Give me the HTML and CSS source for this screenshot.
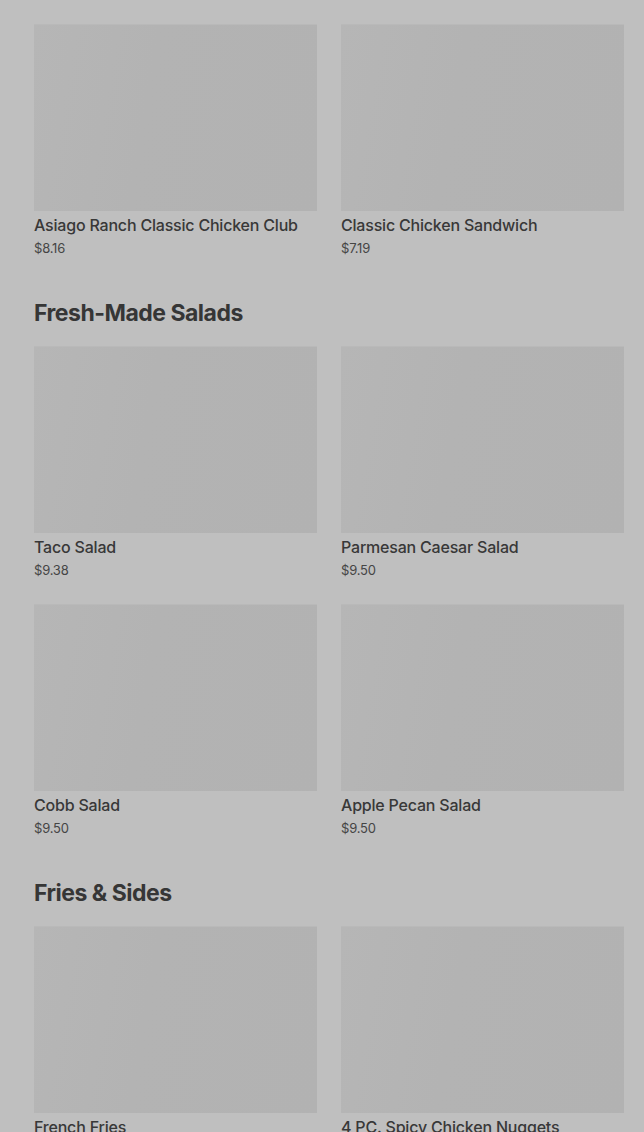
FILE: index.html
```html
<!DOCTYPE html>
<html lang="en">

<head>
    <meta charset="UTF-8">
    <title>Menu</title>
    <link rel="stylesheet" href="styles.css">
</head>

<body>
    <div class="menu">
        <section class="category">
            <ul class="items">
                <li class="item">
                    <div class="thumb"></div>
                    <h3 class="name">Asiago Ranch Classic Chicken Club</h3>
                    <p class="price">$8.16</p>
                </li>
                <li class="item">
                    <div class="thumb"></div>
                    <h3 class="name">Classic Chicken Sandwich</h3>
                    <p class="price">$7.19</p>
                </li>
            </ul>
        </section>

        <section class="category">
            <h2 class="category-title">Fresh-Made Salads</h2>
            <ul class="items">
                <li class="item">
                    <div class="thumb"></div>
                    <h3 class="name">Taco Salad</h3>
                    <p class="price">$9.38</p>
                </li>
                <li class="item">
                    <div class="thumb"></div>
                    <h3 class="name">Parmesan Caesar Salad</h3>
                    <p class="price">$9.50</p>
                </li>
                <li class="item">
                    <div class="thumb"></div>
                    <h3 class="name">Cobb Salad</h3>
                    <p class="price">$9.50</p>
                </li>
                <li class="item">
                    <div class="thumb"></div>
                    <h3 class="name">Apple Pecan Salad</h3>
                    <p class="price">$9.50</p>
                </li>
            </ul>
        </section>

        <section class="category">
            <h2 class="category-title">Fries &amp; Sides</h2>
            <ul class="items">
                <li class="item">
                    <div class="thumb"></div>
                    <h3 class="name">French Fries</h3>
                    <p class="price">$2.59</p>
                </li>
                <li class="item">
                    <div class="thumb"></div>
                    <h3 class="name">4 PC. Spicy Chicken Nuggets</h3>
                    <p class="price">$2.19</p>
                </li>
            </ul>
        </section>
    </div>
</body>

</html>
```
FILE: styles.css
```css
body {
    margin: 0;
    background: #bfbfbf;
    color: #383838;
    font-family: Inter, "Liberation Sans", Arial, sans-serif;
    overflow: hidden;
}

ul {
    padding: 0;
    margin: 0;
    list-style: none;
}

h2,
h3,
p {
    margin: 0;
}

.menu {
    padding: 24px 20px 0 34px;
}

.category + .category {
    margin-top: 40px;
}

.category-title {
    font-size: 23px;
    line-height: 32px;
    font-weight: 700;
    letter-spacing: -0.5px;
    color: #363636;
    margin-bottom: 17px;
}

.items {
    display: grid;
    grid-template-columns: 283px 283px;
    column-gap: 24px;
    row-gap: 25px;
}

.thumb {
    height: 187px;
    background: linear-gradient(100deg, #b6b6b6 0%, #b3b3b3 40%, #b2b2b2 100%);
    box-shadow: inset 0 1px 0 #b9b9b9;
}

.name {
    margin-top: 4px;
    font-size: 16px;
    line-height: 20px;
    font-weight: 500;
    letter-spacing: -0.2px;
}

.price {
    margin-top: 4px;
    font-size: 13px;
    line-height: 18px;
    color: #454545;
    letter-spacing: -0.2px;
}
```
